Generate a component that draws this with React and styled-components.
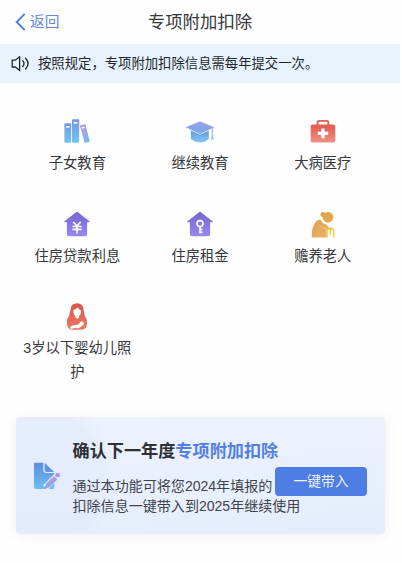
import React from "react";
import styled, { createGlobalStyle } from "styled-components";

const BookIcon = () => (
  <svg width="26" height="26" viewBox="0 0 26 26">
    <defs>
      <linearGradient id="book" x1="0" y1="0" x2="0" y2="1">
        <stop offset="0" stopColor="#7398e2" />
        <stop offset="1" stopColor="#74c4ef" />
      </linearGradient>
      <linearGradient id="bookEnd" x1="0" y1="0" x2="0" y2="1">
        <stop offset="0" stopColor="#bd94e6" />
        <stop offset="1" stopColor="#74bdec" />
      </linearGradient>
    </defs>
    <rect x="0.4" y="4.2" width="6.8" height="19.6" rx="1" fill="url(#book)" />
    <rect x="8" y="0.2" width="7.2" height="23.6" rx="1" fill="url(#book)" />
    <path d="M15.8 6.6l4.6-1.3q1-.2 1.2.7l4 16q.2 1-.7 1.2l-3.5.6q-.8.1-1-.7z" fill="url(#bookEnd)" />
    <path d="M2 7h3.7v1.7H2zM9.7 3h3.8v1.7H9.7zM17.2 8.2l3.2-.9.5 1.6-3.2.9z" fill="#eef6ff" />
  </svg>
);

const CapIcon = () => (
  <svg width="30" height="26" viewBox="0 0 30 26">
    <defs>
      <linearGradient id="cap" x1="0" y1="0" x2="0" y2="1">
        <stop offset="0" stopColor="#9c9ee8" />
        <stop offset="1" stopColor="#73a8e9" />
      </linearGradient>
      <linearGradient id="capBase" x1="0" y1="0" x2="0" y2="1">
        <stop offset="0" stopColor="#6298e0" />
        <stop offset="1" stopColor="#83c7f2" />
      </linearGradient>
    </defs>
    <path d="M5.8 11.6l9.2 4 8.8-4v8.4q-8.8 7.2-18 0z" fill="url(#capBase)" />
    <path d="M15 2.2l14.6 6.1L15 15.2.4 8.3z" fill="url(#cap)" stroke="#f5f9ff" strokeWidth=".4" />
    <path d="M27.3 9v8" stroke="#82baf0" strokeWidth="1.1" />
    <path d="M27.3 15.4l1.6 5h-3.2z" fill="#82c4f2" />
  </svg>
);

const MedicalIcon = () => (
  <svg width="26" height="26" viewBox="0 0 26 26">
    <defs>
      <linearGradient id="medical" x1="0" y1="0" x2="0" y2="1">
        <stop offset="0" stopColor="#e15b4e" />
        <stop offset="1" stopColor="#ed9080" />
      </linearGradient>
    </defs>
    <path d="M7.6 6V3.5q0-1.6 1.6-1.6h7.6q1.6 0 1.6 1.6V6" fill="none" stroke="#df6053" strokeWidth="1.9" />
    <rect x="0.7" y="5.4" width="24.6" height="18" rx="2" fill="url(#medical)" />
    <path d="M11.3 9.6h3.4v3.1h3.5v3.4h-3.5v3.2h-3.4v-3.2H7.8v-3.4h3.5z" fill="#fff" />
  </svg>
);

const HouseIcon = ({ rent }) => (
  <svg width="26" height="26" viewBox="0 0 26 26">
    <defs>
      <linearGradient id="house" x1="0" y1="0" x2="0" y2="1">
        <stop offset="0" stopColor="#7168cc" />
        <stop offset="1" stopColor="#9987f4" />
      </linearGradient>
    </defs>
    <path
      d="M13 0q.5 0 .9.3l11.6 9q.6.6-.2 1h-2.2v12q0 2-2 2H4.9q-2 0-2-2v-12H.7q-.8-.4-.2-1l11.6-9q.4-.3.9-.3z"
      fill="url(#house)"
    />
    {rent ? (
      <g fill="none" stroke="#fff" strokeWidth="1.6">
        <circle cx="13" cy="11.6" r="3" />
        <path d="M13 14.6v6.8M13 17.4h2.4M13 20.4h2.4" />
      </g>
    ) : (
      <path
        d="M9.3 10l3.7 4.1 3.7-4.1M13 13.8v7.6M8.4 14.5h9.2M8.4 17.4h9.2"
        fill="none"
        stroke="#fff"
        strokeWidth="1.6"
      />
    )}
  </svg>
);

const ElderIcon = () => (
  <svg width="24" height="28" viewBox="0 0 24 28">
    <defs>
      <linearGradient id="elder" x1="0" y1="0" x2="1" y2="1">
        <stop offset="0" stopColor="#dda052" />
        <stop offset="1" stopColor="#f0b66c" />
      </linearGradient>
    </defs>
    <circle cx="12" cy="3.6" r="2.5" fill="#e1a14b" />
    <circle cx="17" cy="6.2" r="5.3" fill="#e5a54c" />
    <path
      d="M9.5 8.6q2.6 4.8 6.6 5.4l1 2.2 4 .5q1 .5.4 1.7h-6.1v8.2H.8q-.5-7.4 2-12.6Q5 9.2 9.5 8.6z"
      fill="url(#elder)"
    />
    <path d="M16.1 26.6V19.2q0-1 1-1h4.6q1 0 1 1v7.4M19.4 18.5v5.3" fill="none" stroke="#f2cc45" strokeWidth="1.6" />
    <path d="M9.2 14.5q2.2 3.1 6.2 3.2" fill="none" stroke="#f6ce94" strokeWidth=".8" />
  </svg>
);

const MotherIcon = () => (
  <svg width="22" height="28" viewBox="0 0 22 28">
    <defs>
      <linearGradient id="mother" x1="0" y1="0" x2="0" y2="1">
        <stop offset="0" stopColor="#d95449" />
        <stop offset="1" stopColor="#ef7969" />
      </linearGradient>
    </defs>
    <path
      d="M11.2.2q6 0 6.4 6.6l1.1 6q2.2 2.6 2.3 6.4.2 7.6-6 7.6H7.2Q1 26.8.8 19.4q0-4 2.3-6.6L4.6 6.6Q5 .2 11.2.2z"
      fill="url(#mother)"
    />
    <path
      d="M11.7 4.6q-1.4 1.8-4.3 2.4Q7.2 11.8 9.5 13.1v1.3l1.8 1.5 1.8-1.5v-1.3q2.2-1.7 1.9-5.7-2.2-.8-3.3-2.8z"
      fill="#fff"
    />
    <circle cx="15.6" cy="20.6" r="2.2" fill="#fff" />
    <path d="M4.2 24.1q2.2-2.4 5.6-2.1l4.1-1.1 1.6 2.5-4 2.2-2.4-.9-3.7 1.2q-1.3-.7-1.2-1.8z" fill="#fff" />
  </svg>
);

const SpeakerIcon = () => (
  <svg width="20" height="16" viewBox="0 0 20 16" fill="none" stroke="#20252b" strokeWidth="1.3">
    <path d="M1.2 4.2h3L8.6.8v13.6l-4.4-3.4h-3z" />
    <path d="M11.8 4.6q2.4 3 0 6M14.6 2.2q5 5.4 0 10.8" strokeLinecap="round" />
  </svg>
);

const EditIcon = () => (
  <svg width="28" height="28" viewBox="0 0 28 28">
    <defs>
      <linearGradient id="page" x1="0" y1="0" x2="0" y2="1">
        <stop offset="0" stopColor="#5c8de0" />
        <stop offset="1" stopColor="#6fbfee" />
      </linearGradient>
      <linearGradient id="pen" x1="0" y1="1" x2="1" y2="0">
        <stop offset="0" stopColor="#86a8ef" />
        <stop offset="1" stopColor="#b19bea" />
      </linearGradient>
    </defs>
    <path d="M2.4.8h7.9v7q0 3.3 3.3 3.3h7.6v14q0 2-2 2H3q-2 0-2-2V2.2Q1 .8 2.4.8z" fill="url(#page)" />
    <path d="M11.6.8l9.6 9.2h-7.6q-2 0-2-2z" fill="#5b94e4" />
    <path d="M12.4 25.4L24.4 13.4" stroke="#e9f0fc" strokeWidth="6.4" />
    <path d="M11.6 26.4l1.2-4.4 8.2-8 3.4 3.4-8.2 8.2z" fill="url(#pen)" />
    <circle cx="24.6" cy="13.2" r="2.4" fill="#b09be9" />
    <path d="M17.2 27.1l4-4v2q0 2-2 2z" fill="#6fc0ee" />
  </svg>
);

const items = [
  { label: "子女教育", icon: <BookIcon /> },
  { label: "继续教育", icon: <CapIcon /> },
  { label: "大病医疗", icon: <MedicalIcon /> },
  { label: "住房贷款利息", icon: <HouseIcon /> },
  { label: "住房租金", icon: <HouseIcon rent /> },
  { label: "赡养老人", icon: <ElderIcon /> },
  { label: "3岁以下婴幼儿照护", icon: <MotherIcon /> },
];

const App = () => {
  return (
    <Page lang="zh-CN">
      <GlobalStyle />
      <Header>
        <Back>
          <svg width="11" height="18" viewBox="0 0 11 18" fill="none" stroke="#4c7cdf" strokeWidth="1.9">
            <path d="M9.7 .8L1.7 9l8 8.2" />
          </svg>
          返回
        </Back>
        <Title>专项附加扣除</Title>
      </Header>
      <Notice>
        <SpeakerIcon />
        <p>按照规定，专项附加扣除信息需每年提交一次。</p>
      </Notice>
      <Grid>
        {items.map((item) => (
          <Item key={item.label}>
            <IconBox>{item.icon}</IconBox>
            <Label>{item.label}</Label>
          </Item>
        ))}
      </Grid>
      <Card>
        <EditIcon />
        <CardText>
          <h2>
            确认下一年度<Accent>专项附加扣除</Accent>
          </h2>
          <p>
            通过本功能可将您2024年填报的
            <br />
            扣除信息一键带入到2025年继续使用
          </p>
        </CardText>
        <ImportButton>一键带入</ImportButton>
      </Card>
    </Page>
  );
};

export default App;

const GlobalStyle = createGlobalStyle`
  body {
    margin: 0;
    background: #fefefe;
  }
  svg {
    display: block;
    flex-shrink: 0;
  }
`;
const Page = styled.div`
  width: 400px;
  height: 563px;
  overflow: hidden;
  font-family: "Liberation Sans", "Noto Sans CJK SC", sans-serif;
  color: #36383c;

  p,
  h1,
  h2 {
    margin: 0;
    white-space: nowrap;
  }
`;
const Header = styled.header`
  height: 44px;
  display: grid;
  grid-template-columns: 1fr auto 1fr;
  align-items: center;
`;
const Back = styled.div`
  display: flex;
  align-items: center;
  gap: 4px;
  padding-left: 15px;
  font-size: 14.7px;
  line-height: 22px;
  color: #6187df;
`;
const Title = styled.h1`
  font-size: 17.4px;
  font-weight: 400;
  line-height: 24px;
`;
const Notice = styled.div`
  height: 39px;
  display: flex;
  align-items: center;
  gap: 7px;
  padding-left: 11px;
  background: #e8f2fc;
  color: #22272d;

  p {
    font-size: 13.35px;
    line-height: 20px;
    padding-top: 1px;
  }
`;
const Grid = styled.div`
  display: grid;
  grid-template-columns: repeat(3, 122.7px);
  grid-auto-rows: 92.5px;
  padding: 33px 0 0 16px;
`;
const Item = styled.div`
  display: flex;
  flex-direction: column;
  align-items: center;
`;
const IconBox = styled.div`
  height: 32px;
  display: flex;
  align-items: center;
`;
const Label = styled.div`
  max-width: 112px;
  margin-top: 3px;
  font-size: 14.3px;
  line-height: 24px;
  text-align: center;
  word-break: break-all;
`;
const Card = styled.section`
  position: relative;
  width: 369px;
  height: 117px;
  box-sizing: border-box;
  display: flex;
  align-items: center;
  gap: 11.5px;
  margin: 23.5px 0 0 16px;
  padding-left: 17px;
  border-radius: 4px;
  background:
    radial-gradient(circle at 15px 60px, rgba(223, 232, 251, 0.5) 0 70px, transparent 86px),
    linear-gradient(175deg, #ecf3fe, #e9f0fd 55%, #e4ecfc);
  box-shadow: 0 1px 12px rgba(80, 90, 110, 0.09);
`;
const CardText = styled.div`
  padding-top: 3px;

  h2 {
    font-size: 17.15px;
    line-height: 26px;
    font-weight: 700;
    color: #2d3036;
  }
  p {
    margin-top: 12px;
    font-size: 14.05px;
    line-height: 20.5px;
    color: #3f434b;
  }
`;
const Accent = styled.span`
  color: #5180e2;
`;
const ImportButton = styled.button`
  position: absolute;
  right: 18px;
  top: 50px;
  width: 92px;
  height: 29px;
  padding: 0;
  border: none;
  border-radius: 4px;
  background: #4e7de4;
  color: #edf3ff;
  font-family: inherit;
  font-size: 13.8px;
  line-height: 29px;
`;
